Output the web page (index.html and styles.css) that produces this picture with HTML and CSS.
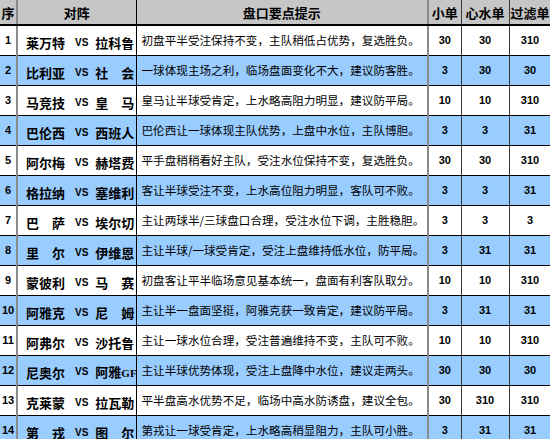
FILE: index.html
```html
<!DOCTYPE html>
<html lang="zh-CN">
<head>
<meta charset="utf-8">
<title>盘口要点提示</title>
<link rel="stylesheet" href="styles.css">
</head>
<body>
<table class="board">
  <colgroup>
    <col class="c-no"><col class="c-match"><col class="c-tip"><col class="c-small"><col class="c-heart"><col class="c-filter">
  </colgroup>
  <thead>
    <tr>
      <th class="no">序</th>
      <th class="match-h">对阵</th>
      <th class="tip-h">盘口要点提示</th>
      <th class="num-h gl">小单</th>
      <th class="num-h">心水单</th>
      <th class="num-h">过滤单</th>
    </tr>
  </thead>
  <tbody>
    <tr><td class="no">1</td><td class="match"><span class="team">莱万特</span><span class="vs">VS</span><span class="team">拉科鲁</span></td><td class="tip">初盘平半受注保持不变，主队稍低占优势，复选胜负。</td><td class="num gl">30</td><td class="num">30</td><td class="num">310</td></tr>
    <tr class="alt"><td class="no">2</td><td class="match"><span class="team">比利亚</span><span class="vs">VS</span><span class="team">社　会</span></td><td class="tip">一球体现主场之利，临场盘面变化不大，建议防客胜。</td><td class="num gl">3</td><td class="num">30</td><td class="num">30</td></tr>
    <tr><td class="no">3</td><td class="match"><span class="team">马竞技</span><span class="vs">VS</span><span class="team">皇　马</span></td><td class="tip">皇马让半球受肯定，上水略高阻力明显，建议防平局。</td><td class="num gl">10</td><td class="num">10</td><td class="num">310</td></tr>
    <tr class="alt"><td class="no">4</td><td class="match"><span class="team">巴伦西</span><span class="vs">VS</span><span class="team">西班人</span></td><td class="tip">巴伦西让一球体现主队优势，上盘中水位，主队博胆。</td><td class="num gl">3</td><td class="num">3</td><td class="num">31</td></tr>
    <tr><td class="no">5</td><td class="match"><span class="team">阿尔梅</span><span class="vs">VS</span><span class="team">赫塔费</span></td><td class="tip">平手盘稍稍看好主队，受注水位保持不变，复选胜负。</td><td class="num gl">30</td><td class="num">30</td><td class="num">310</td></tr>
    <tr class="alt"><td class="no">6</td><td class="match"><span class="team">格拉纳</span><span class="vs">VS</span><span class="team">塞维利</span></td><td class="tip">客让半球受注不变，上水高位阻力明显，客队可不败。</td><td class="num gl">3</td><td class="num">3</td><td class="num">31</td></tr>
    <tr><td class="no">7</td><td class="match"><span class="team">巴　萨</span><span class="vs">VS</span><span class="team">埃尔切</span></td><td class="tip">主让两球半/三球盘口合理，受注水位下调，主胜稳胆。</td><td class="num gl">3</td><td class="num">3</td><td class="num">3</td></tr>
    <tr class="alt"><td class="no">8</td><td class="match"><span class="team">里　尔</span><span class="vs">VS</span><span class="team">伊维恩</span></td><td class="tip">主让半球/一球受肯定，受注上盘维持低水位，防平局。</td><td class="num gl">3</td><td class="num">31</td><td class="num">31</td></tr>
    <tr><td class="no">9</td><td class="match"><span class="team">蒙彼利</span><span class="vs">VS</span><span class="team">马　赛</span></td><td class="tip">初盘客让平半临场意见基本统一，盘面有利客队取分。</td><td class="num gl">10</td><td class="num">10</td><td class="num">310</td></tr>
    <tr class="alt"><td class="no">10</td><td class="match"><span class="team">阿雅克</span><span class="vs">VS</span><span class="team">尼　姆</span></td><td class="tip">主让半一盘面坚挺，阿雅克获一致肯定，建议防平局。</td><td class="num gl">3</td><td class="num">31</td><td class="num">31</td></tr>
    <tr><td class="no">11</td><td class="match"><span class="team">阿弗尔</span><span class="vs">VS</span><span class="team">沙托鲁</span></td><td class="tip">主让一球水位合理，受注普遍维持不变，主队可不败。</td><td class="num gl">10</td><td class="num">10</td><td class="num">310</td></tr>
    <tr class="alt"><td class="no">12</td><td class="match"><span class="team">尼奥尔</span><span class="vs">VS</span><span class="team">阿雅<span class="latin">GF</span></span></td><td class="tip">主让半球优势体现，受注上盘降中水位，建议走两头。</td><td class="num gl">30</td><td class="num">30</td><td class="num">30</td></tr>
    <tr><td class="no">13</td><td class="match"><span class="team">克莱蒙</span><span class="vs">VS</span><span class="team">拉瓦勒</span></td><td class="tip">平半盘高水优势不足，临场中高水防诱盘，建议全包。</td><td class="num gl">30</td><td class="num">310</td><td class="num">310</td></tr>
    <tr class="alt"><td class="no">14</td><td class="match"><span class="team">第　戎</span><span class="vs">VS</span><span class="team">图　尔</span></td><td class="tip">第戎让一球受肯定，上水略高稍显阻力，主队可小胜。</td><td class="num gl">3</td><td class="num">31</td><td class="num">31</td></tr>
  </tbody>
</table>
</body>
</html>
```

FILE: styles.css
```css
html, body {
  margin: 0;
  padding: 0;
  background: #ffffff;
  overflow: hidden;
}

body {
  font-family: "Noto Sans CJK SC", "Liberation Sans", sans-serif;
  color: #000000;
}

.board {
  border-collapse: collapse;
  table-layout: fixed;
  width: 551px;
}

.c-no { width: 17px; }
.c-match { width: 119px; }
.c-tip { width: 292px; }
.c-small { width: 33px; }
.c-heart { width: 48px; }
.c-filter { width: 42px; }

.board th,
.board td {
  padding: 0;
  border-right: 1px solid #000000;
  border-bottom: 1px solid #000000;
  vertical-align: middle;
  line-height: 1;
  white-space: nowrap;
}

.board th {
  height: 24px;
  background: #c6c6c6;
  font-size: 13px;
  font-weight: bold;
  text-align: center;
  border-bottom: 2px solid #000000;
}

.board td {
  height: 29px;
}

.board .no {
  border-right: 2px solid #8a8a8a;
  text-align: center;
}

.board .gl {
  border-left: 2px solid #8a8a8a;
}

.board .num-h,
.board .num {
  border-right-color: #3a3a3a;
}

.board .alt td {
  background: #99ccff;
}

.board td.no {
  font-family: "Liberation Sans", Arial, sans-serif;
  font-weight: bold;
  font-size: 11px;
}

.board td.match {
  padding-left: 8px;
}

.match .team {
  display: inline-block;
  width: 39px;
  font-size: 13px;
  font-weight: bold;
  vertical-align: middle;
}

.match .latin {
  font-family: "Liberation Serif", serif;
  font-size: 11px;
}

.match .vs {
  display: inline-block;
  margin: 0 7px 0 10px;
  font-family: "Liberation Sans", Arial, sans-serif;
  font-weight: bold;
  font-size: 10px;
  vertical-align: middle;
}

.board td.tip {
  padding-left: 5px;
  font-size: 11.6px;
  overflow: hidden;
}

.board td.num {
  text-align: center;
  font-family: "Liberation Sans", Arial, sans-serif;
  font-weight: bold;
  font-size: 11px;
}
```
